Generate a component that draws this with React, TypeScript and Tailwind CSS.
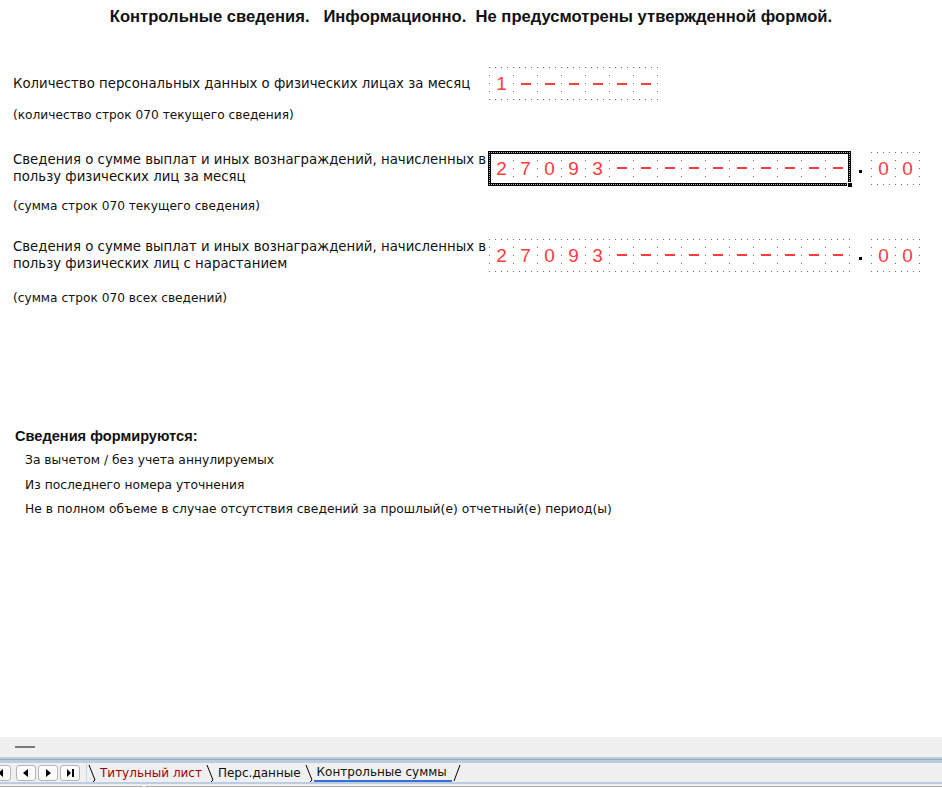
import React from 'react';

const RED = 'text-[#ff3b3b]';
const DOTS_V = 'bg-[repeating-linear-gradient(180deg,transparent_0px,transparent_7px,#6b6b6b_7px,#6b6b6b_8px)]';
const DOTS_H = 'bg-[repeating-linear-gradient(90deg,#6b6b6b_0px,#6b6b6b_1px,transparent_1px,transparent_6px)]';

// one box of the form grid: dotted left edge, then the glyph
function Cell({ ch }: { ch: string }) {
  return (
    <div className="flex h-full">
      <span className={`w-px self-stretch ${DOTS_V}`} />
      <span className="flex w-[23px] items-center justify-center">
        {ch === '-' ? (
          <span className="block h-[2px] w-[10px] bg-[#ff3b3b]" />
        ) : (
          <span className={`font-['Liberation_Sans',Arial,sans-serif] text-[19px] leading-none ${RED}`}>{ch}</span>
        )}
      </span>
    </div>
  );
}

function Field({ value }: { value: string }) {
  return (
    <div className="flex flex-col">
      <div className={`h-px ${DOTS_H}`} />
      <div className="flex h-[31px]">
        {value.split('').map((ch, i) => (
          <Cell key={i} ch={ch} />
        ))}
        <span className={`w-px self-stretch ${DOTS_V}`} />
      </div>
      <div className={`h-px ${DOTS_H}`} />
    </div>
  );
}

function Amount({ rub, kop, active }: { rub: string; kop: string; active?: boolean }) {
  return (
    <div className="flex items-center">
      <div className="relative">
        <Field value={rub} />
        {active && (
          <>
            {/* focus frame: thick black border with sparse white dots */}
            <div className="pointer-events-none absolute -inset-[1px] border-[3px] border-black" />
            <div className="pointer-events-none absolute -inset-[0px] border border-dotted border-white/70" />
            <div className="absolute -bottom-[3px] -right-[3px] h-[6px] w-[6px] border border-white bg-black" />
          </>
        )}
      </div>
      <span className="mx-[9px] mt-[6px] block h-[3px] w-[3px] bg-black" />
      <Field value={kop} />
    </div>
  );
}

function TabSlash({ flip }: { flip?: boolean }) {
  return (
    <svg width="10" height="20" viewBox="0 0 10 20" className="shrink-0">
      {flip ? (
        <line x1="8" y1="2" x2="2" y2="18" stroke="#000" strokeWidth="1" />
      ) : (
        <path d="M2 2 L8 17 L6 19" stroke="#000" strokeWidth="1" fill="none" />
      )}
    </svg>
  );
}

function NavButton({ kind }: { kind: 'first' | 'prev' | 'next' | 'last' }) {
  return (
    <div className="flex h-[16px] w-[20px] items-center justify-center rounded-[3px] border border-[#b5b5b5] bg-[#fbfbfb]">
      <svg width="10" height="10" viewBox="0 0 10 10">
        {(kind === 'prev' || kind === 'first') && <polygon points="7,1 7,9 2,5" fill="#000" />}
        {kind === 'next' && <polygon points="3,1 3,9 8,5" fill="#000" />}
        {kind === 'last' && (
          <>
            <polygon points="2,1 2,9 6,5" fill="#000" />
            <rect x="7" y="1" width="2" height="8" fill="#000" />
          </>
        )}
      </svg>
    </div>
  );
}

export default function App() {
  return (
    <div className="flex h-screen flex-col bg-white font-['DejaVu_Sans',sans-serif] text-[#111]">
      <main className="flex-1 overflow-hidden">
        <h1 className="pt-[7px] text-center font-['Liberation_Sans',Arial,sans-serif] text-[16.6px] font-bold leading-[20px] whitespace-pre">
          {'Контрольные сведения.   Информационно.  Не предусмотрены утвержденной формой.'}
        </h1>

        {/* количество */}
        <div className="mt-[40px] flex">
          <div className="flex h-[33px] w-[489px] items-center pl-[13px] text-[13.3px] whitespace-nowrap">
            Количество персональных данных о физических лицах за месяц
          </div>
          <Field value="1------" />
        </div>
        <p className="mt-[8px] pl-[13px] text-[12.2px] leading-[15px]">(количество строк 070 текущего сведения)</p>

        {/* сумма за месяц */}
        <div className="mt-[28px] flex">
          <div className="w-[489px] pl-[13px] text-[13.3px] leading-[17px] whitespace-nowrap">
            Сведения о сумме выплат и иных вознаграждений, начисленных в
            <br />
            пользу физических лиц за месяц
          </div>
          <Amount rub="27093----------" kop="00" active />
        </div>
        <p className="mt-[14px] pl-[13px] text-[12.2px] leading-[15px]">(сумма строк 070 текущего сведения)</p>

        {/* сумма с нарастанием */}
        <div className="mt-[24px] flex">
          <div className="w-[489px] pl-[13px] text-[13.3px] leading-[17px] whitespace-nowrap">
            Сведения о сумме выплат и иных вознаграждений, начисленных в
            <br />
            пользу физических лиц с нарастанием
          </div>
          <Amount rub="27093----------" kop="00" />
        </div>
        <p className="mt-[19px] pl-[13px] text-[12.2px] leading-[15px]">(сумма строк 070 всех сведений)</p>

        <div className="mt-[122px] pl-[15px]">
          <p className="font-['Liberation_Sans',Arial,sans-serif] text-[14.6px] font-bold leading-[17px]">Сведения формируются:</p>
          <ul className="mt-[8px] flex flex-col gap-[9.5px] pl-[10px] text-[12.3px] leading-[15px]">
            <li>За вычетом / без учета аннулируемых</li>
            <li>Из последнего номера уточнения</li>
            <li>Не в полном объеме в случае отсутствия сведений за прошлый(е) отчетный(е) период(ы)</li>
          </ul>
        </div>
      </main>

      <footer className="bg-[#f0f0f0]">
        <div className="flex h-[20px] items-center pl-[15px]">
          <span className="block h-[2px] w-[20px] bg-[#7a7a7a]" />
        </div>
        <div className="h-[2px] bg-[#bccde3]" />
        <div className="h-px bg-[#a6a6a6]" />
        <div className="h-[3px] bg-[#bccde3]" />
        <div className="flex h-[19px] items-center">
          <div className="flex w-[86px] items-center gap-[2px]">
            <div className="-ml-[9px]">
              <NavButton kind="first" />
            </div>
            <div className="ml-[3px]">
              <NavButton kind="prev" />
            </div>
            <NavButton kind="next" />
            <NavButton kind="last" />
          </div>
          <div className="flex h-full items-center border-l border-[#c9d6e6] text-[12px] leading-none">
            <TabSlash />
            <span className="px-[3px] text-[#a00000]">Титульный лист</span>
            <TabSlash />
            <span className="px-[3px]">Перс.данные</span>
            <TabSlash />
            <span className="flex h-full items-center border-b-2 border-[#3a6fd6] px-[3px] pr-[5px]">Контрольные суммы</span>
            <TabSlash flip />
          </div>
        </div>
        <div className="h-[2px] bg-[#bccde3]" />
        <div className="h-[2px] bg-[#f0f0f0]" />
        <div className="flex h-px">
          <div className="w-[143px] bg-[#b0b0b0]" />
          <div className="w-[2px] bg-[#f0f0f0]" />
          <div className="flex-1 bg-[#b0b0b0]" />
        </div>
        <div className="h-px bg-white" />
      </footer>
    </div>
  );
}
